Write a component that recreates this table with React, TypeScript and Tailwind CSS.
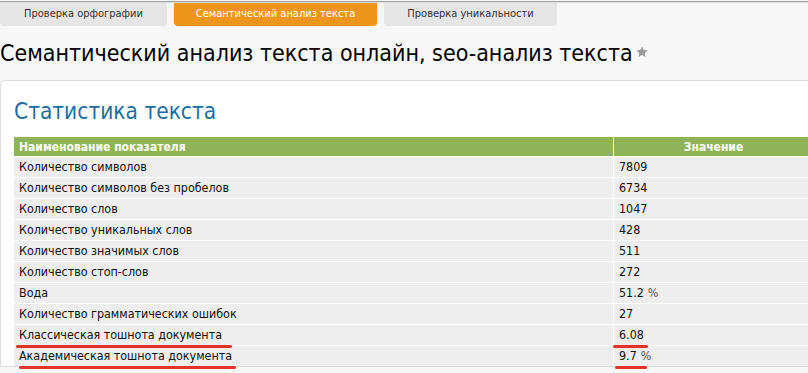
import React from 'react'

const font = { fontFamily: '"DejaVu Sans Condensed", "DejaVu Sans", Tahoma, sans-serif' }

type Row = { name: string; value: string; unit?: string; mark?: 'classic' | 'academic' }

const rows: Row[] = [
  { name: 'Количество символов', value: '7809' },
  { name: 'Количество символов без пробелов', value: '6734' },
  { name: 'Количество слов', value: '1047' },
  { name: 'Количество уникальных слов', value: '428' },
  { name: 'Количество значимых слов', value: '511' },
  { name: 'Количество стоп-слов', value: '272' },
  { name: 'Вода', value: '51.2', unit: '%' },
  { name: 'Количество грамматических ошибок', value: '27' },
  { name: 'Классическая тошнота документа', value: '6.08', mark: 'classic' },
  { name: 'Академическая тошнота документа', value: '9.7', unit: '%', mark: 'academic' },
]

const Tab = ({ label, active, width }: { label: string; active?: boolean; width: string }) => (
  <div
    className={`flex h-[23px] items-center justify-center rounded-b-[4px] text-[11px] ${width} ${
      active ? 'bg-[#ee951b] text-white' : 'bg-[#e5e5e5] text-[#333]'
    }`}
  >
    {label}
  </div>
)

const Underline = ({ className }: { className: string }) => (
  <span className={`pointer-events-none absolute z-10 h-[3px] rounded-full bg-[#e2312b] ${className}`} />
)

export default function App() {
  return (
    <div className="h-[373px] w-[808px] overflow-hidden bg-[#f7f7f7] text-black" style={font}>
      <div className="mt-px h-px bg-[#a3a3a3]" />
      <div className="h-px bg-[#dcdcdc]" />
      <div className="flex gap-[7px]">
        <Tab label="Проверка орфографии" width="w-[167px]" />
        <Tab label="Семантический анализ текста" width="w-[203px]" active />
        <Tab label="Проверка уникальности" width="w-[173px]" />
      </div>

      <div className="flex h-[54px] items-center">
        <h1 className="text-[23px] leading-none">Семантический анализ текста онлайн, seo-анализ текста</h1>
        <svg viewBox="0 0 24 24" className="ml-[2px] mt-[-2px] h-[14px] w-[14px]" fill="#9a9a9a">
          <path d="M12 2.5l2.9 6.1 6.6.8-4.9 4.6 1.3 6.6L12 17.3l-5.9 3.3 1.3-6.6-4.9-4.6 6.6-.8z" />
        </svg>
      </div>

      <div className="w-[830px] rounded-tl-[4px] border border-[#dcdcdc] bg-white pl-[13px] pt-[15px]">
        <h2 className="h-[41px] text-[22.5px] leading-[30px] text-[#1a6ea3]">Статистика текста</h2>

        <div className="grid w-[799px] grid-cols-[599px_199px] gap-px bg-white text-[12.4px]">
          <div className="flex h-[19px] items-center bg-[#8fb457] pl-[5px] text-[12px] font-bold text-white">
            Наименование показателя
          </div>
          <div className="flex h-[19px] items-center justify-center bg-[#8fb457] text-[12px] font-bold text-white">
            Значение
          </div>
          {rows.map((r) => (
            <React.Fragment key={r.name}>
              <div className="relative flex h-[20px] items-center bg-[#eeeeee] pl-[5px] text-[#111]">
                {r.name}
                {r.mark === 'classic' && <Underline className="left-[2px] top-[20px] w-[216px]" />}
                {r.mark === 'academic' && <Underline className="left-[5px] top-[20px] w-[217px]" />}
              </div>
              <div className="relative flex h-[20px] items-center bg-[#eeeeee] pl-[5px] text-[#111]">
                {r.value}
                {r.unit && <span className="ml-[4px] text-[#555]">{r.unit}</span>}
                {r.mark === 'classic' && <Underline className="left-[-1px] top-[20px] w-[35px]" />}
                {r.mark === 'academic' && <Underline className="left-[1px] top-[20px] w-[32px]" />}
              </div>
            </React.Fragment>
          ))}
        </div>
      </div>
    </div>
  )
}
